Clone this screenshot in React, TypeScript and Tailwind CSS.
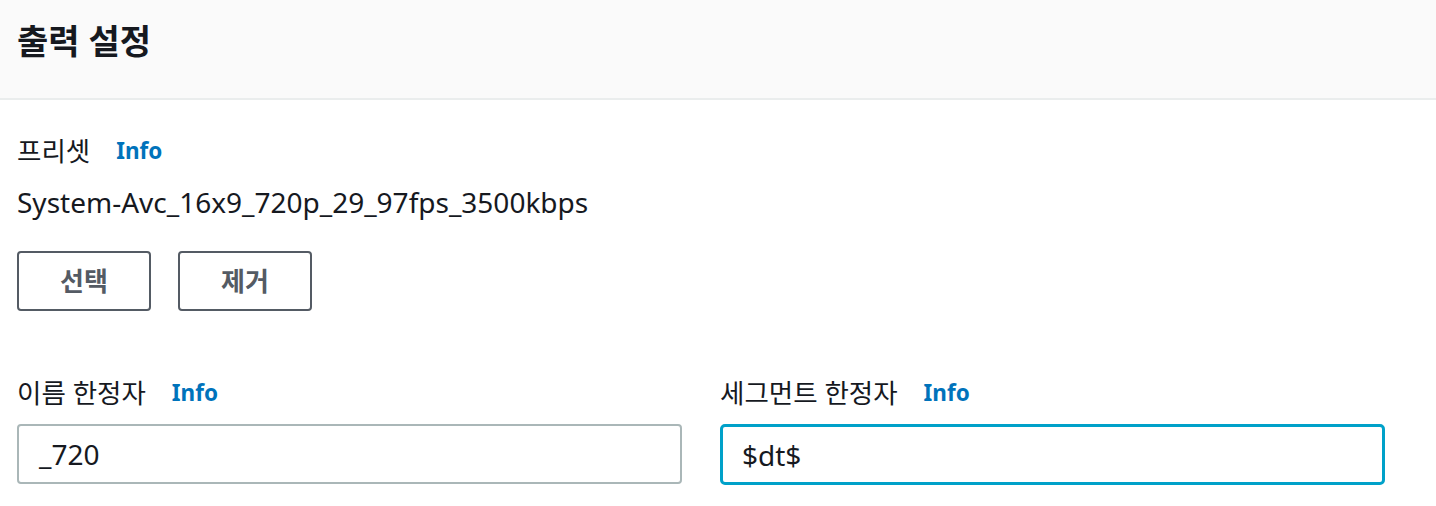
const font = { fontFamily: '"Noto Sans", "Noto Sans CJK KR", sans-serif' };

function Label({ text }: { text: string }) {
  return (
    <div className="flex items-center h-[40px]">
      <span className="text-[26.5px] text-[#16191f] leading-none">{text}</span>
      <span className="ml-[26px] text-[22.5px] font-bold text-[#0073bb] leading-none">
        Info
      </span>
    </div>
  );
}

function OutlineButton({ text }: { text: string }) {
  return (
    <button className="w-[134px] h-[60px] border-2 border-[#545b64] rounded-[4px] bg-white text-[26px] font-bold text-[#545b64]">
      {text}
    </button>
  );
}

export default function App() {
  return (
    <div className="w-[1436px] h-[506px] bg-white" style={font}>
      <header className="h-[100px] bg-[#fafafa] border-b-2 border-[#eaeded] flex items-center px-[17px]">
        <h2 className="text-[34px] font-bold text-[#16191f] leading-none -mt-[16px]">
          출력 설정
        </h2>
      </header>
      <section className="pl-[17px] pr-[51px] pt-[31px]">
        <Label text="프리셋" />
        <p className="mt-[11px] text-[28px] text-[#16191f] leading-[40px]">
          System-Avc_16x9_720p_29_97fps_3500kbps
        </p>
        <div className="mt-[29px] flex gap-[27px]">
          <OutlineButton text="선택" />
          <OutlineButton text="제거" />
        </div>
        <div className="mt-[62px] grid grid-cols-2 gap-[38px]">
          <div className="flex flex-col gap-[11px]">
            <Label text="이름 한정자" />
            <div className="h-[60px] border-2 border-[#aab7b8] rounded-[4px] flex items-center px-[20px] text-[28px] text-[#16191f]">
              _720
            </div>
          </div>
          <div className="flex flex-col gap-[11px]">
            <Label text="세그먼트 한정자" />
            <div className="h-[61px] border-[3px] border-[#00a1c9] rounded-[5px] flex items-center px-[19px] text-[28px] text-[#16191f]">
              $dt$
            </div>
          </div>
        </div>
      </section>
    </div>
  );
}
